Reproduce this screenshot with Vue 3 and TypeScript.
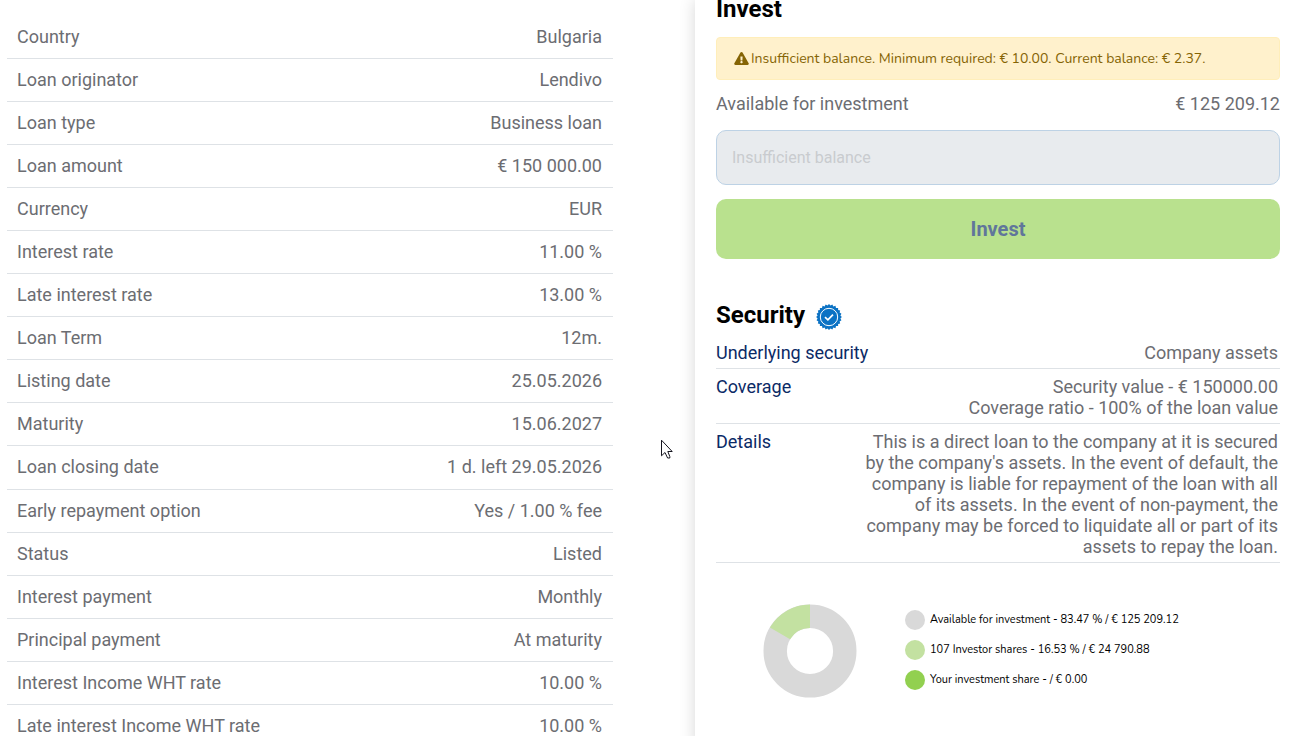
<script setup lang="ts">
interface Row {
  label: string
  value: string
}

const loanRows: Row[] = [
  { label: 'Country', value: 'Bulgaria' },
  { label: 'Loan originator', value: 'Lendivo' },
  { label: 'Loan type', value: 'Business loan' },
  { label: 'Loan amount', value: '€ 150 000.00' },
  { label: 'Currency', value: 'EUR' },
  { label: 'Interest rate', value: '11.00 %' },
  { label: 'Late interest rate', value: '13.00 %' },
  { label: 'Loan Term', value: '12m.' },
  { label: 'Listing date', value: '25.05.2026' },
  { label: 'Maturity', value: '15.06.2027' },
  { label: 'Loan closing date', value: '1 d. left 29.05.2026' },
  { label: 'Early repayment option', value: 'Yes / 1.00 % fee' },
  { label: 'Status', value: 'Listed' },
  { label: 'Interest payment', value: 'Monthly' },
  { label: 'Principal payment', value: 'At maturity' },
  { label: 'Interest Income WHT rate', value: '10.00 %' },
  { label: 'Late interest Income WHT rate', value: '10.00 %' },
]

const securityRows: { label: string; lines: string[] }[] = [
  { label: 'Underlying security', lines: ['Company assets'] },
  {
    label: 'Coverage',
    lines: ['Security value - € 150000.00', 'Coverage ratio - 100% of the loan value'],
  },
  {
    label: 'Details',
    lines: [
      "This is a direct loan to the company at it is secured by the company's assets. In the event of default, the company is liable for repayment of the loan with all of its assets. In the event of non-payment, the company may be forced to liquidate all or part of its assets to repay the loan.",
    ],
  },
]

const legend: { tone: string; text: string }[] = [
  { tone: 'dot-available', text: 'Available for investment - 83.47 % / € 125 209.12' },
  { tone: 'dot-investors', text: '107 Investor shares - 16.53 % / € 24 790.88' },
  { tone: 'dot-own', text: 'Your investment share - / € 0.00' },
]

const investedShare = 16.53

// Scalloped outline of the verified seal
const sealPoints: string = Array.from({ length: 48 }, (_, i) => {
  const radius = i % 2 === 0 ? 12.9 : 11.5
  const angle = (i * Math.PI) / 24
  return `${(13 + radius * Math.sin(angle)).toFixed(2)},${(13 - radius * Math.cos(angle)).toFixed(2)}`
}).join(' ')
</script>

<template>
  <main class="page">
    <section class="loan">
      <table class="loan-table">
        <tbody>
          <tr v-for="row in loanRows" :key="row.label">
            <th scope="row">{{ row.label }}</th>
            <td>{{ row.value }}</td>
          </tr>
        </tbody>
      </table>
    </section>

    <aside class="panel">
      <h2 class="title invest-title">Invest</h2>
      <div class="alert" role="alert">
        <svg class="warn" viewBox="0 0 576 512" aria-hidden="true">
          <path
            fill="currentColor"
            d="M569.5 440C588 472 564.8 512 527.9 512H48.1c-36.9 0-60-40.1-41.6-72L246.4 24c18.5-32 64.7-32 83.2 0l239.9 416zM288 354c-25.4 0-46 20.6-46 46s20.6 46 46 46 46-20.6 46-46-20.6-46-46-46zm-43.7-165.3l7.4 136c.3 6.4 5.6 11.3 12 11.3h48.5c6.4 0 11.6-5 12-11.3l7.4-136c.4-6.9-5-12.7-12-12.7h-63.4c-6.9 0-12.3 5.8-11.9 12.7z"
          />
        </svg>
        <span>Insufficient balance. Minimum required: € 10.00. Current balance: € 2.37.</span>
      </div>
      <div class="available">
        <label for="amount">Available for investment</label>
        <span>€ 125 209.12</span>
      </div>
      <input id="amount" class="amount" type="text" placeholder="Insufficient balance" disabled />
      <button class="invest" type="button" disabled>Invest</button>

      <h2 class="title security-title">
        Security
        <svg class="seal" viewBox="0 0 26 26" aria-hidden="true">
          <polygon :points="sealPoints" fill="#0b72c4" />
          <circle cx="13" cy="13" r="8.7" fill="none" stroke="#fff" stroke-width="1" />
          <path d="M9 13.1l2.9 2.7 5.1-5.2" fill="none" stroke="#fff" stroke-width="1.7" />
        </svg>
      </h2>
      <table class="security-table">
        <tbody>
          <tr v-for="row in securityRows" :key="row.label">
            <th scope="row">{{ row.label }}</th>
            <td>
              <div v-for="line in row.lines" :key="line">{{ line }}</div>
            </td>
          </tr>
        </tbody>
      </table>

      <div class="shares">
        <svg class="donut" viewBox="0 0 94 94" role="img" aria-label="Investment shares">
          <g transform="rotate(-90 47 47)" fill="none" stroke-width="23.4">
            <circle cx="47" cy="47" r="34.8" stroke="#d9d9d9" />
            <circle
              cx="47"
              cy="47"
              r="34.8"
              stroke="#c3e1a1"
              pathLength="100"
              :stroke-dasharray="`${investedShare} ${100 - investedShare}`"
              :stroke-dashoffset="investedShare"
            />
          </g>
        </svg>
        <ul class="legend">
          <li v-for="item in legend" :key="item.tone">
            <span class="dot" :class="item.tone"></span>
            <span>{{ item.text }}</span>
          </li>
        </ul>
      </div>
    </aside>

    <svg class="pointer" viewBox="0 0 13 20" aria-hidden="true">
      <path
        d="M1.5 1.2V16.800L5 13.5L7.6 19H9.8V17.5L7.800 12.5H12.2Z"
        fill="#fff"
        stroke="#15151f"
        stroke-width="1"
      />
    </svg>
  </main>
</template>

<style>
body {
  margin: 0;
  background: #fff;
}
</style>

<style scoped>
.page {
  box-sizing: border-box;
  position: relative;
  display: grid;
  grid-template-columns: 695fr 606fr;
  height: 100vh;
  overflow: hidden;
  font-family: Roboto, "Liberation Sans", sans-serif;
  font-size: 18px;
  line-height: 21px;
  color: #6c6d72;
}

.loan {
  padding: 16px 82px 0 7px;
}

table {
  width: 100%;
  border-collapse: separate;
  border-spacing: 0;
}

th {
  font-weight: 400;
  text-align: left;
}

td {
  text-align: right;
}

th,
td {
  border-bottom: 1px solid #dee2e6;
}

.loan-table {
  height: 732px;
}

.loan-table th,
.loan-table td {
  padding: 10px 11px 11px 10px;
}

.panel {
  padding: 0 21px;
  background: #fff;
  box-shadow: 0 0 15px rgba(0, 0, 0, 0.16);
}

.title {
  margin: 0;
  font-size: 24px;
  font-weight: 700;
  color: #000;
}

.invest-title {
  line-height: 18px;
}

.alert {
  display: flex;
  align-items: center;
  gap: 2px;
  margin-top: 19px;
  padding: 10px 17px;
  border: 1px solid #ffeeba;
  border-radius: 4px;
  background: #fff1cc;
  color: #856404;
  font-family: Nunito, Lato, "Open Sans", sans-serif;
  font-size: 14px;
  white-space: nowrap;
}

.warn {
  width: 15px;
  height: 13px;
}

.available {
  display: flex;
  justify-content: space-between;
  margin-top: 13px;
}

.amount {
  box-sizing: border-box;
  display: block;
  width: 100%;
  height: 55px;
  margin-top: 16px;
  padding: 0 15px;
  border: 1px solid #bdd2e5;
  border-radius: 10px;
  background: #e8ebee;
  font-family: inherit;
  font-size: 16px;
}

.amount::placeholder {
  color: #c9cbcf;
  opacity: 1;
}

.invest {
  display: block;
  width: 100%;
  height: 60px;
  margin-top: 14px;
  border: 0;
  border-radius: 10px;
  background: #b9e18e;
  color: #60769b;
  font-family: inherit;
  font-size: 20px;
  font-weight: 700;
}

.security-title {
  display: flex;
  align-items: center;
  gap: 11px;
  margin-top: 41px;
  line-height: 28px;
}

.seal {
  width: 26px;
  height: 26px;
  margin-top: 4px;
}

.security-table {
  margin-top: 5px;
  table-layout: fixed;
}

.security-table th,
.security-table td {
  padding: 7px 2px 5px 0;
  vertical-align: top;
}

.security-table th {
  width: 25%;
  color: #0b2a66;
  white-space: nowrap;
}

.shares {
  display: flex;
  align-items: flex-start;
  gap: 48px;
  margin-top: 41px;
  padding-left: 47px;
}

.donut {
  width: 94px;
  height: 94px;
}

.legend {
  display: grid;
  gap: 10px;
  margin: 0;
  padding: 6px 0 0;
  list-style: none;
  font-family: Nunito, Lato, "Open Sans", sans-serif;
  font-size: 11px;
  line-height: 20px;
  color: #000;
  white-space: nowrap;
}

.legend li {
  display: flex;
  align-items: center;
  gap: 5px;
}

.dot {
  width: 20px;
  height: 20px;
  border-radius: 50%;
}

.dot-available {
  background: #d9d9d9;
}

.dot-investors {
  background: #c3e1a1;
}

.dot-own {
  background: #92d050;
}

.pointer {
  position: absolute;
  top: 439px;
  left: 660px;
  width: 13px;
  height: 20px;
}
</style>
